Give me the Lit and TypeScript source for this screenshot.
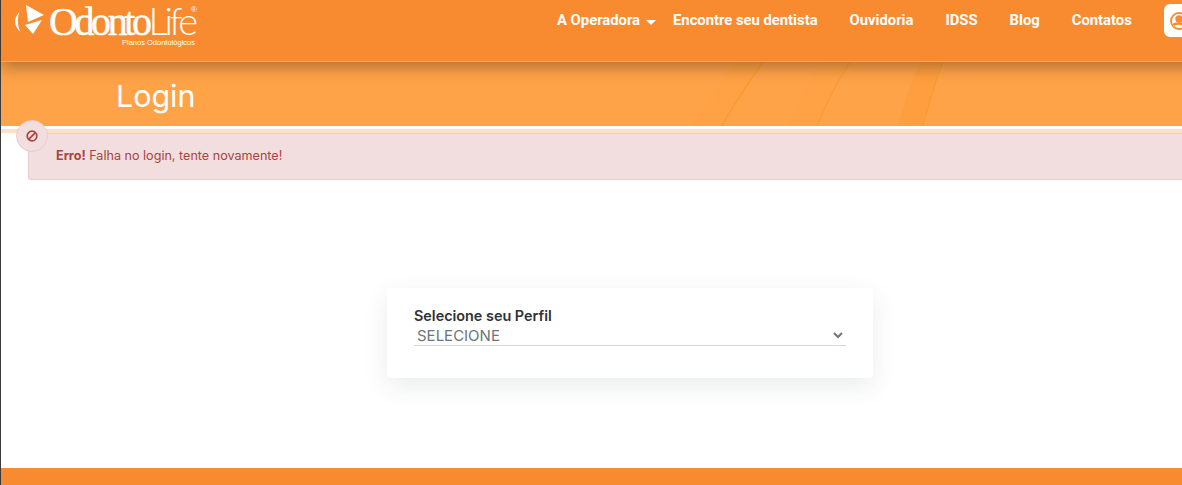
import { LitElement, html, css } from 'lit';
import { customElement } from 'lit/decorators.js';

const NAV = ['Encontre seu dentista', 'Ouvidoria', 'IDSS', 'Blog', 'Contatos'];

@customElement('app-root')
export class AppRoot extends LitElement {
  static styles = css`
    :host {
      display: block;
      height: 485px;
      overflow: hidden;
      font-family: Inter, 'Liberation Sans', sans-serif;
      background: #fff;
      position: relative;
    }
    /* the real page is wider than the window, so the right side gets cut */
    .page {
      width: 1258px;
      height: 485px;
      display: flex;
      flex-direction: column;
      margin-left: 1px;
    }
    .edge {
      position: absolute;
      left: 0;
      top: 0;
      bottom: 0;
      width: 1px;
      background: #3a3a3a;
    }
    .topbar {
      height: 61px;
      flex: none;
      background: #f88b2f;
      border-bottom: 1px solid #d9b08c;
      display: flex;
      position: relative;
      z-index: 2;
      box-shadow: 0 6px 14px rgba(90, 60, 20, 0.45);
    }
    .logo {
      flex: none;
      width: 200px;
      height: 50px;
      color: #fff;
      position: relative;
    }
    .logo svg {
      position: absolute;
      left: 13px;
      top: 4px;
    }
    .word {
      position: absolute;
      left: 48px;
      top: 0;
      font: 400 40px/40px 'Liberation Serif', serif;
      letter-spacing: -3.4px;
      -webkit-text-stroke: 0.5px #fff;
      white-space: nowrap;
    }
    .word-life {
      font: 300 38px/40px Lato, sans-serif;
      letter-spacing: -3.4px;
      -webkit-text-stroke: 0;
    }
    .reg {
      position: absolute;
      left: 190px;
      top: 5px;
      font: 400 8px/10px 'Liberation Sans', sans-serif;
    }
    .tag {
      position: absolute;
      left: 121px;
      top: 38px;
      font: 400 7.5px/9px 'Liberation Sans', sans-serif;
      white-space: nowrap;
    }
    nav {
      margin-left: 356px;
      display: flex;
      align-items: flex-start;
      padding-top: 12px;
      font: 700 14.8px/17px Roboto, sans-serif;
      color: #fff;
      white-space: nowrap;
    }
    .op {
      display: flex;
      align-items: center;
      gap: 6px;
      margin-right: 17px;
    }
    .caret {
      width: 0;
      height: 0;
      margin-top: 3px;
      border-left: 5px solid transparent;
      border-right: 5px solid transparent;
      border-top: 5px solid #fff;
    }
    .link {
      margin-right: 32px;
    }
    .user {
      width: 50px;
      height: 33px;
      margin-top: -8px;
      background: #fff;
      border-radius: 6px;
      display: flex;
      padding-left: 6px;
      align-items: center;
      box-sizing: border-box;
    }
    .banner {
      height: 64px;
      flex: none;
      box-sizing: content-box;
      background: #ffa349;
      border-bottom: 3px solid #fff;
      position: relative;
      overflow: hidden;
      color: #fff;
      display: flex;
      align-items: center;
      padding-left: 115px;
      font-size: 30.4px;
      line-height: 38px;
    }
    .banner svg {
      position: absolute;
      left: 660px;
      top: 0;
    }
    .banner span {
      position: relative;
      top: 2px;
    }
    .stripe {
      height: 4px;
      flex: none;
      background: #fee0c3;
    }
    .alert {
      position: relative;
      flex: none;
      height: 47px;
      margin: 0 0 0 27px;
      box-sizing: border-box;
      background: #f2dede;
      border: 1px solid #ebccd1;
      border-right: none;
      border-radius: 3px 0 0 3px;
      color: #a94442;
      font-size: 12.6px;
      line-height: 15px;
      padding: 14px 0 0 27px;
    }
    .badge {
      position: absolute;
      left: -13.5px;
      top: -14px;
      width: 32px;
      height: 32px;
      border-radius: 50%;
      background: #f2dede;
      border: 1px solid #ebccd1;
      box-sizing: border-box;
      display: flex;
      align-items: center;
      justify-content: center;
    }
    .main {
      flex: 1;
      display: flex;
      justify-content: center;
      align-items: flex-start;
      padding-top: 108px;
    }
    .card {
      width: 486px;
      height: 90px;
      box-sizing: border-box;
      background: #fff;
      border-radius: 4px;
      box-shadow: 0 8px 24px rgba(60, 70, 90, 0.1);
      padding: 19px 27px 0;
    }
    .label {
      font-size: 14.4px;
      line-height: 17px;
      font-weight: 600;
      color: #2f3136;
    }
    .select {
      display: flex;
      align-items: center;
      justify-content: space-between;
      height: 21px;
      margin-top: 1px;
      box-sizing: border-box;
      border-bottom: 1px solid #d5d8dc;
      padding: 0 3px 0 3px;
      font-size: 15px;
      color: #6c757d;
    }
    footer {
      height: 17px;
      flex: none;
      background: #f88b2f;
    }
  `;

  render() {
    return html`
      <div class="edge"></div>
      <div class="page">
        <header class="topbar">
          <div class="logo">
            <svg width="32" height="32" viewBox="0 0 32 32" fill="#fff">
              <path d="M12 1 L30 11 L14 18 Z" />
              <path d="M11 21 L28 16 L19 30 Z" />
              <path d="M5.5 8 C-0.5 14 -0.5 22 6.5 28 C3.5 22 3 15 5.5 8 Z" />
            </svg>
            <div class="word">Odonto<span class="word-life">Life</span></div>
            <div class="reg">®</div>
            <div class="tag">Planos Odontológicos</div>
          </div>
          <nav>
            <div class="op">A Operadora <span class="caret"></span></div>
            ${NAV.map((n) => html`<div class="link">${n}</div>`)}
            <div class="user">
              <svg width="18" height="18" viewBox="0 0 18 18" fill="none" stroke="#f88b2f" stroke-width="1.8">
                <circle cx="9" cy="9" r="8" />
                <circle cx="9" cy="7" r="2.8" fill="#f88b2f" />
                <path d="M3.5 13 C5 11 13 11 14.5 13" stroke-width="2.4" />
              </svg>
            </div>
          </nav>
        </header>
        <section class="banner">
          <svg width="300" height="64" viewBox="0 0 300 64" fill="none">
            <path d="M31 64 C45 40 60 20 74 0 L102 0 C88 20 73 42 61 64 Z" fill="#ffa144" />
            <path d="M61 64 C73 42 88 20 102 0" stroke="#f99a28" stroke-width="1.2" />
            <path d="M127 64 C135 42 146 20 159 0 L189 0 C176 20 165 42 156 64 Z" fill="#ffa246" />
            <path d="M156 64 C165 42 176 20 189 0" stroke="#f99a28" stroke-width="1" />
            <path d="M237 64 C243 42 250 20 259 0 L282 0 C274 20 268 42 262 64 Z" fill="#ff9e3e" />
            <path d="M262 64 C268 42 274 20 282 0" stroke="#f99a28" stroke-width="1" />
          </svg>
          <span>Login</span>
        </section>
        <div class="stripe"></div>
        <div class="alert">
          <div class="badge">
            <svg width="14" height="14" viewBox="0 0 14 14" fill="none" stroke="#a94442" stroke-width="1.7">
              <circle cx="7" cy="7" r="4.8" />
              <path d="M3.6 10.4 L10.4 3.6" />
            </svg>
          </div>
          <strong>Erro!</strong> Falha no login, tente novamente!
        </div>
        <main class="main">
          <div class="card">
            <div class="label">Selecione seu Perfil</div>
            <div class="select">
              <span>SELECIONE</span>
              <svg width="10" height="8" viewBox="0 0 10 8" fill="none" stroke="#6c757d" stroke-width="2">
                <path d="M1 2 L5 6 L9 2" />
              </svg>
            </div>
          </div>
        </main>
        <footer></footer>
      </div>
    `;
  }
}
